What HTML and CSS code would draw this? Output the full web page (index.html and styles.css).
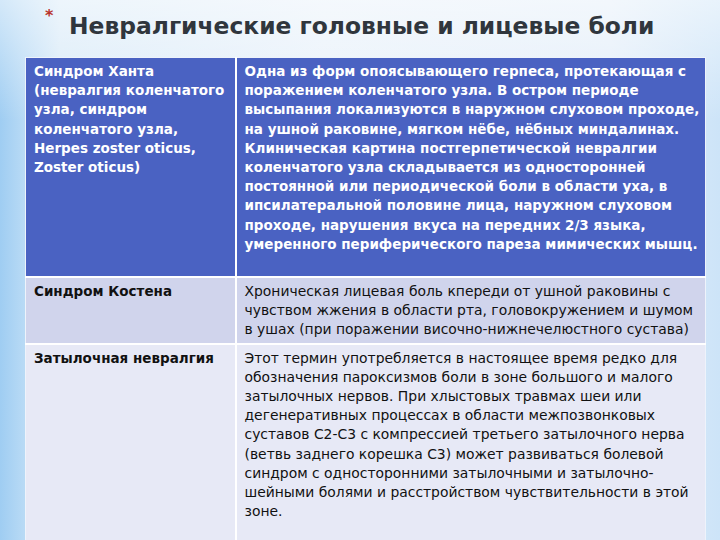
FILE: index.html
```html
<!DOCTYPE html>
<html lang="ru">
<head>
<meta charset="utf-8">
<title>Невралгические головные и лицевые боли</title>
<link rel="stylesheet" href="styles.css">
</head>
<body>
<div class="slide">
  <h1 class="title"><span class="star">*</span>Невралгические головные и лицевые боли</h1>
  <table class="grid">
    <colgroup><col class="c1"><col class="c2"></colgroup>
    <tr class="head">
      <td>Синдром Ханта<br>(невралгия коленчатого<br>узла, синдром<br>коленчатого узла,<br>Herpes zoster oticus,<br>Zoster oticus)</td>
      <td>Одна из форм опоясывающего герпеса, протекающая с<br>поражением коленчатого узла. В остром периоде<br>высыпания локализуются в наружном слуховом проходе,<br>на ушной раковине, мягком нёбе, нёбных миндалинах.<br>Клиническая картина постгерпетической невралгии<br>коленчатого узла складывается из односторонней<br>постоянной или периодической боли в области уха, в<br>ипсилатеральной половине лица, наружном слуховом<br>проходе, нарушения вкуса на передних 2/3 языка,<br>умеренного периферического пареза мимических мышц.</td>
    </tr>
    <tr class="odd">
      <td class="name">Синдром Костена</td>
      <td>Хроническая лицевая боль кпереди от ушной раковины с<br>чувством жжения в области рта, головокружением и шумом<br>в ушах (при поражении височно-нижнечелюстного сустава)</td>
    </tr>
    <tr class="even">
      <td class="name">Затылочная невралгия</td>
      <td>Этот термин употребляется в настоящее время редко для<br>обозначения пароксизмов боли в зоне большого и малого<br>затылочных нервов. При хлыстовых травмах шеи или<br>дегенеративных процессах в области межпозвонковых<br>суставов С2-С3 с компрессией третьего затылочного нерва<br>(ветвь заднего корешка С3) может развиваться болевой<br>синдром с односторонними затылочными и затылочно-<br>шейными болями и расстройством чувствительности в этой<br>зоне.<br>&nbsp;</td>
    </tr>
  </table>
</div>
</body>
</html>
```
FILE: styles.css
```css
html, body {
  margin: 0;
  padding: 0;
  width: 720px;
  height: 540px;
  overflow: hidden;
}
body {
  background:
    linear-gradient(to bottom, rgba(255,255,255,0.55) 0, rgba(255,255,255,0) 120px),
    linear-gradient(to right, #9fcdf2 0, #b6d9f5 22px, #d8eaf8 60px, #e8f1fa 45%, #e3eef9 85%, #cde4f8 100%);
  font-family: "DejaVu Sans", Verdana, sans-serif;
}
.slide {
  padding: 0 15px 0 25px;
}
.title {
  margin: 0;
  height: 57px;
  box-sizing: border-box;
  padding: 13px 0 0 44px;
  font-family: "DejaVu Sans", Verdana, sans-serif;
  font-weight: bold;
  font-size: 23.4px;
  line-height: 27px;
  color: #30363d;
  position: relative;
  white-space: nowrap;
}
.star {
  position: absolute;
  left: 20px;
  top: 2px;
  font-size: 16px;
  font-weight: bold;
  color: #b8322a;
}
.grid {
  width: 680px;
  border-collapse: collapse;
  table-layout: fixed;
  font-size: 13.9px;
  line-height: 19.2px;
}
.c1 { width: 210px; }
.c2 { width: 470px; }
.grid td {
  vertical-align: top;
  padding: 4px 4px 3px 8px;
  border: 2px solid #ffffff;
  white-space: nowrap;
}
.grid tr:first-child td { border-top: 1px solid #eef3fb; }
.grid td:first-child { border-left: 1px solid #eef3fb; }
.grid td:last-child { border-right: 1px solid #eef3fb; }
.head td {
  background: #4a62c2;
  color: #ffffff;
  font-weight: bold;
  font-size: 13.5px;
  height: 211px;
}
.odd td {
  background: #d0d4ec;
  color: #111111;
  height: 55px;
}
.even td {
  background: #e7e9f6;
  color: #111111;
  height: 200px;
}
.name {
  font-weight: bold;
  font-size: 13.5px;
}
```
